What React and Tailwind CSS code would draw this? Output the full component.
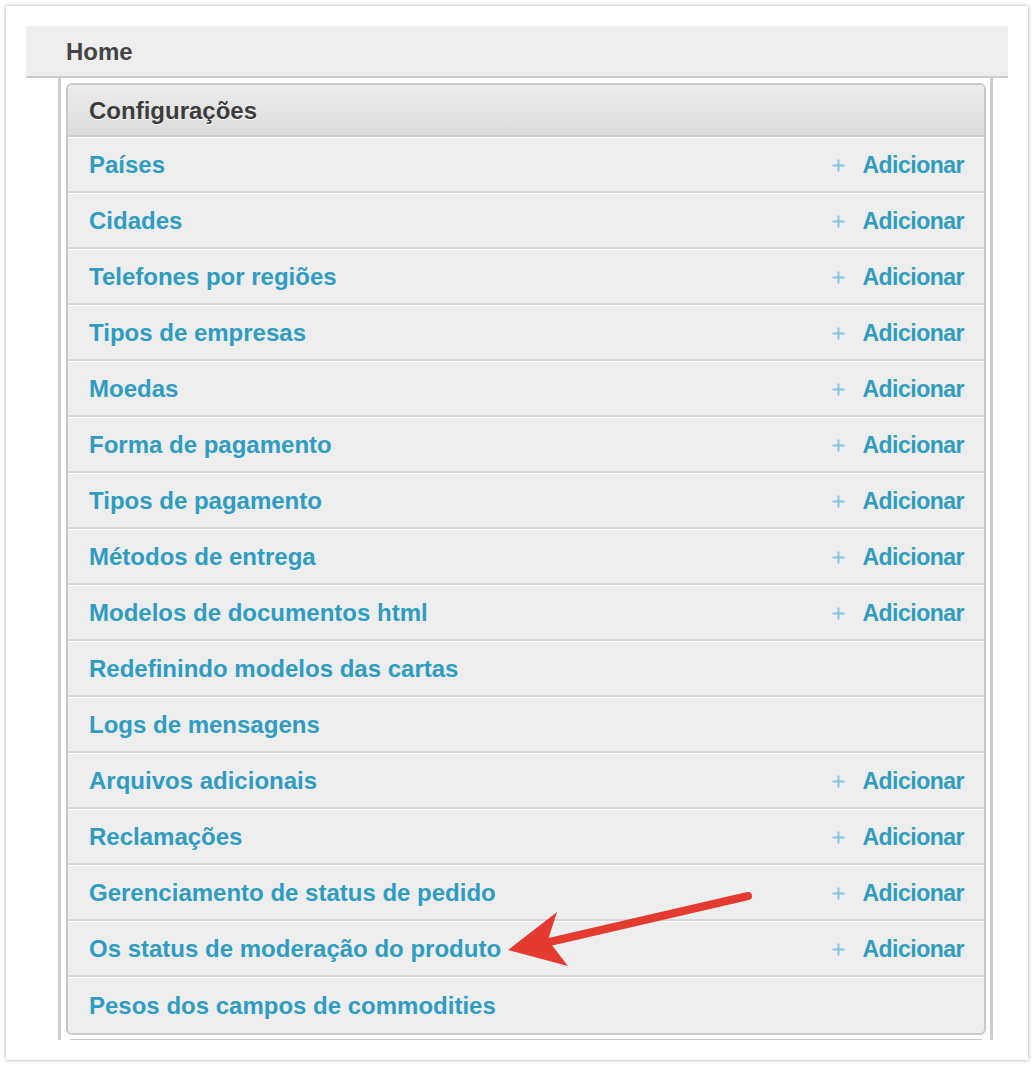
import React from 'react';

const rows = [
    { label: 'Países', add: true },
    { label: 'Cidades', add: true },
    { label: 'Telefones por regiões', add: true },
    { label: 'Tipos de empresas', add: true },
    { label: 'Moedas', add: true },
    { label: 'Forma de pagamento', add: true },
    { label: 'Tipos de pagamento', add: true },
    { label: 'Métodos de entrega', add: true },
    { label: 'Modelos de documentos html', add: true },
    { label: 'Redefinindo modelos das cartas', add: false },
    { label: 'Logs de mensagens', add: false },
    { label: 'Arquivos adicionais', add: true },
    { label: 'Reclamações', add: true },
    { label: 'Gerenciamento de status de pedido', add: true },
    { label: 'Os status de moderação do produto', add: true },
    { label: 'Pesos dos campos de commodities', add: false },
];

const PlusIcon = () => (
    <svg width="13" height="13" viewBox="0 0 13 13" className="mr-[17px]">
        <path d="M6.5 0.5v12M0.5 6.5h12" stroke="#86c4de" strokeWidth="2" />
    </svg>
);

const Row = ({ label, add, last }) => (
    <div
        className={`flex items-center justify-between h-[56px] pl-[21px] pr-[20px] pt-[1px] ${
            last ? 'border-t border-white' : 'border-t border-white border-b-2 border-b-[#d6d6d6]'
        }`}
    >
        <span className="text-[24px] font-bold text-[#2f9cc3]">{label}</span>
        {add && (
            <span className="flex items-center">
                <PlusIcon />
                <span className="text-[23px] font-bold text-[#2f9cc3] tracking-[-0.5px]">Adicionar</span>
            </span>
        )}
    </div>
);

const App = () => {
    return (
        <div className="min-h-[1067px] bg-white p-[6px]" style={{ fontFamily: '"Liberation Sans", Arial, sans-serif' }}>
            <div className="relative h-[1054px] w-[1022px] bg-white shadow-[0_0_4px_rgba(0,0,0,0.35)] px-[20px] pt-[20px]">
                <div className="h-[52px] bg-[#eeeeee] border-b-2 border-[#cccccc] flex items-center pl-[40px] pt-[1px]">
                    <span className="text-[24px] font-bold text-[#444444]">Home</span>
                </div>
                <div className="ml-[32px] w-[935px] h-[962px] overflow-hidden border-x-[3px] border-[#cccccc] pl-[5px] pr-[4px] pt-[5px]">
                    <div className="rounded-[6px] border-2 border-[#c8c8c8] bg-[#eeeeee] overflow-hidden">
                        <div className="h-[52px] flex items-center pl-[21px] pt-[1px] bg-gradient-to-b from-[#ececec] to-[#dcdcdc] border-b-2 border-[#cccccc]">
                            <span className="text-[24px] font-bold text-[#3c3c3c] [text-shadow:0_1px_0_#fff]">Configurações</span>
                        </div>
                        {rows.map((r, i) => (
                            <Row key={r.label} label={r.label} add={r.add} last={i === rows.length - 1} />
                        ))}
                    </div>
                    <div className="mt-[4px] h-[20px] rounded-t-[6px] border-2 border-[#c8c8c8] bg-[#eeeeee]" />
                </div>

                <svg className="absolute left-0 top-0 pointer-events-none" width="1022" height="1054" viewBox="6 6 1022 1054">
                    <line x1="748" y1="896" x2="545" y2="943" stroke="#e53a2f" strokeWidth="8" strokeLinecap="round" />
                    <polygon points="508,950 557,912 548,940 568,966" fill="#e53a2f" />
                </svg>
            </div>
        </div>
    );
};

export default App;
